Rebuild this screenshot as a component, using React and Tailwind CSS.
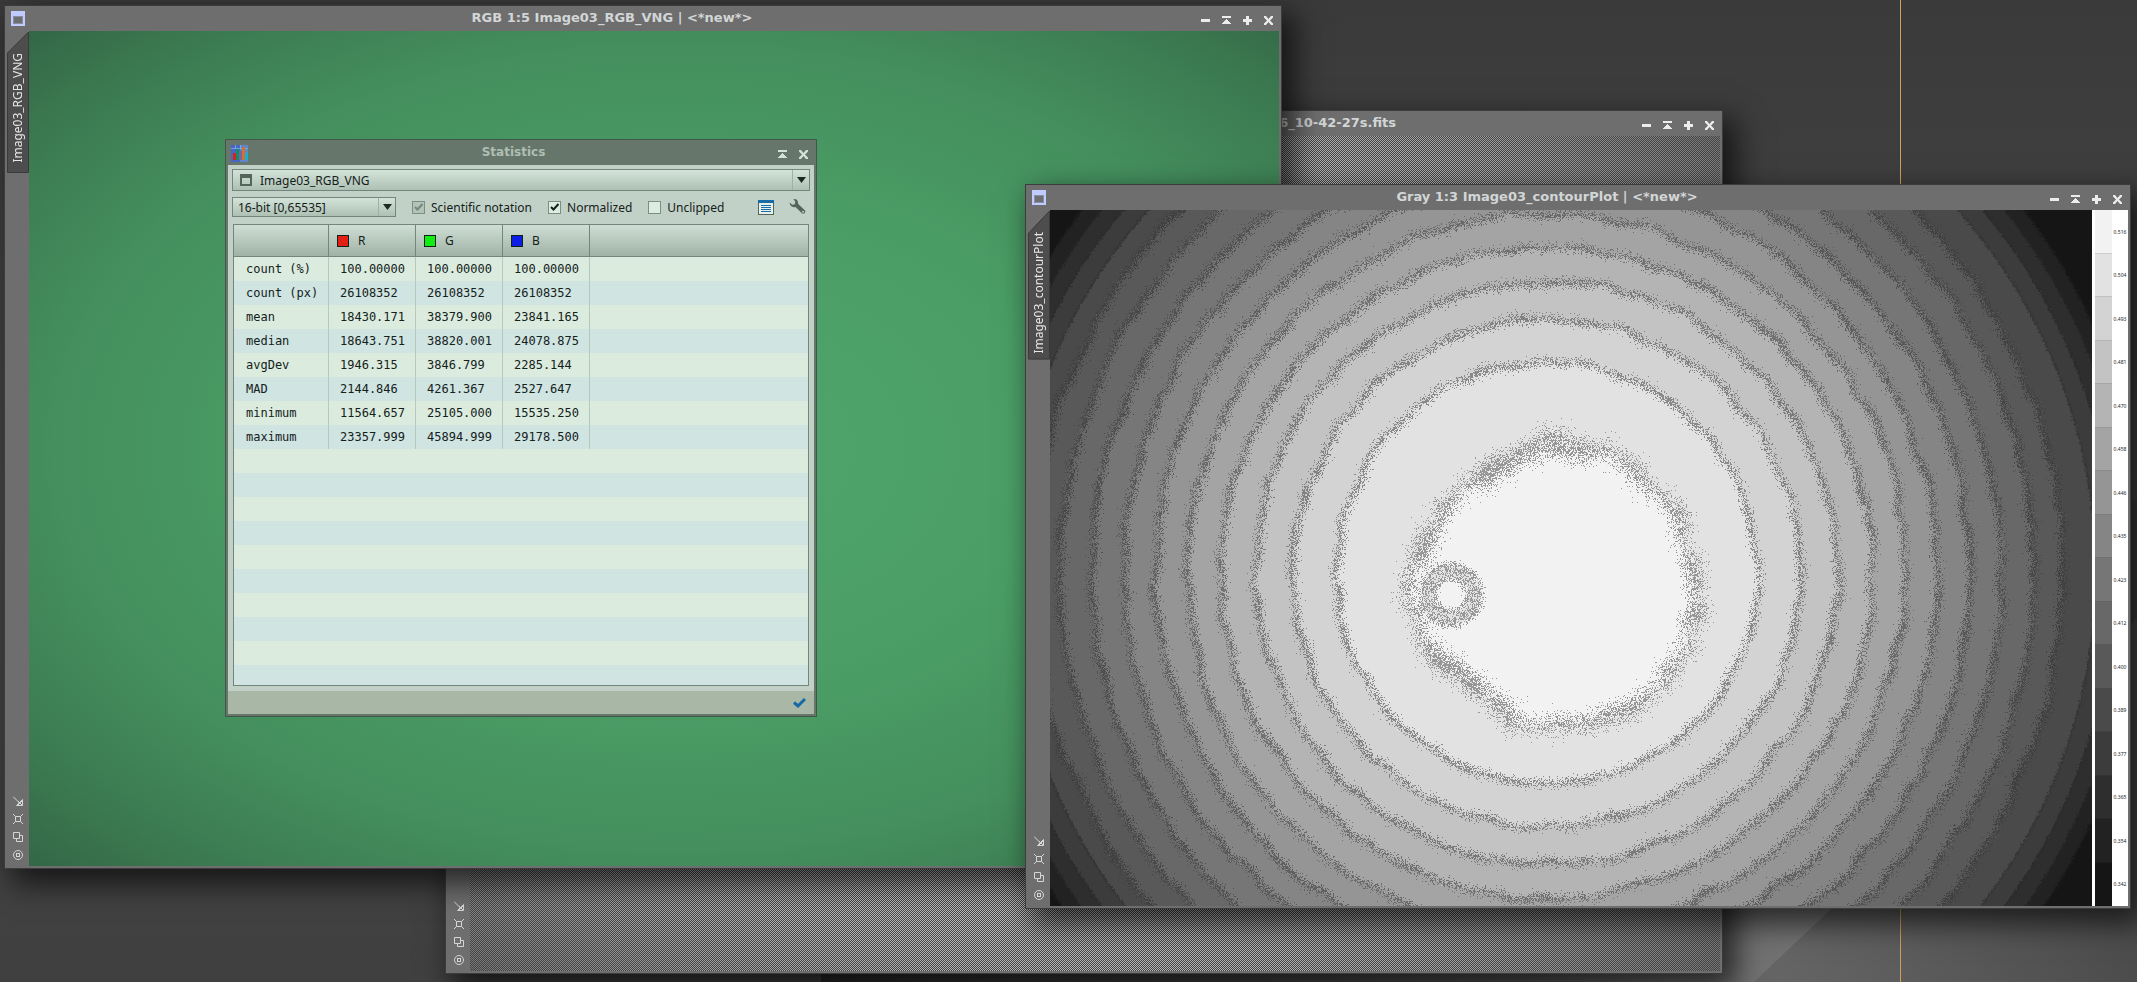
import React, { useState } from 'react';
import clsx from 'clsx';

const LEVELS = [
  '#f2f2f2', '#e2e2e2', '#d3d3d3', '#c3c3c3', '#b4b4b4', '#a4a4a4', '#959595', '#858585',
  '#767676', '#686868', '#595959', '#4a4a4a', '#3c3c3c', '#2e2e2e', '#222222', '#151515',
];

const SCALE_LABELS = [
  '0.516', '0.504', '0.493', '0.481', '0.470', '0.458', '0.446', '0.435',
  '0.423', '0.412', '0.400', '0.389', '0.377', '0.365', '0.354', '0.342',
];

// radius of each contour, inner to outer, with the level outside it
const RINGS = [
  { r: 211, level: 2, line: '#8a8a8a' },
  { r: 254, level: 3, line: '#828282' },
  { r: 291, level: 4, line: '#7a7a7a' },
  { r: 326, level: 5, line: '#727272' },
  { r: 359, level: 6, line: '#6a6a6a' },
  { r: 391, level: 7, line: '#606060' },
  { r: 423, level: 8, line: '#585858' },
  { r: 455, level: 9, line: '#505050' },
  { r: 487, level: 10, line: '#484848' },
  { r: 516, level: 11, line: '#404040' },
  { r: 543, level: 12, line: '#363636' },
  { r: 562, level: 13, line: '#2c2c2c' },
  { r: 579, level: 14, line: '#242424' },
  { r: 594, level: 15, line: '#1a1a1a' },
];

const PEAK =
  'M1543 434 L1575 442 L1606 449 L1640 478 L1672 508 L1688 540 L1693 575 L1690 620 L1680 655 L1655 685 L1620 708 L1590 718 L1552 726 L1515 720 L1490 696 L1462 678 L1432 655 L1412 622 L1405 590 L1412 560 L1422 535 L1442 505 L1470 480 L1505 456 Z';

// the broad noisy parts of the innermost contour
const PEAK_NOISE = 'M1418 560 L1432 522 L1460 490 L1500 464 L1545 446 L1590 456 M1424 640 L1450 662 L1485 690 M1500 722 L1550 722 L1600 714';

const STATS = [
  ['count (%)', '100.00000', '100.00000', '100.00000'],
  ['count (px)', '26108352', '26108352', '26108352'],
  ['mean', '18430.171', '38379.900', '23841.165'],
  ['median', '18643.751', '38820.001', '24078.875'],
  ['avgDev', '1946.315', '3846.799', '2285.144'],
  ['MAD', '2144.846', '4261.367', '2527.647'],
  ['minimum', '11564.657', '25105.000', '15535.250'],
  ['maximum', '23357.999', '45894.999', '29178.500'],
];

const CHANNELS = [
  { name: 'R', swatch: 'bg-[#e32014]' },
  { name: 'G', swatch: 'bg-[#10ee10]' },
  { name: 'B', swatch: 'bg-[#0c1ee6]' },
];

const GLYPHS = {
  minimize: <path d="M0 3h9v3H0z" />,
  shade: <path d="M0 0h9v2H0zM4 3h1v1h1v1h1v1h1v1h1v1H0V7h1V6h1V5h1V4h1z" />,
  maximize: <path d="M3 0h3v3h3v3H6v3H3V6H0V3h3z" />,
  close: <path d="M0 0h2l2.500 3L7 0h2v1.500L6 4.500l3 3V9H7L4.500 6 2 9H0V7.500l3-3-3-3z" />,
};

const WINDOW_GLYPHS = ['minimize', 'shade', 'maximize', 'close'];

function TitleButtons({ names, color }) {
  return (
    <div className="flex shrink-0 items-center pt-[3px]">
      {names.map(name => (
        <button key={name} aria-label={name} className="flex h-[21px] w-[21px] items-center justify-center">
          <svg width="9" height="9" viewBox="0 0 9 9" fill={color}>{GLYPHS[name]}</svg>
        </button>
      ))}
    </div>
  );
}

function SideIcons() {
  const icons = {
    resize: <path d="M0 .5l7 7M9.500 3.500v6h-6zM5 5l4 4M9 5L5 9" />,
    fit: <path d="M2.500 2.500h5v5h-5zM0 0l2.500 2.500M10 0L7.500 2.500M0 10l2.500-2.500M10 10L7.500 7.500" />,
    duplicate: <path d="M.5.5h6v6h-6zM6.500 3.500h3v6h-6v-3" />,
    target: (
      <>
        <circle cx="5" cy="5" r="4.500" />
        <rect x="3.500" y="3.500" width="3" height="3" />
      </>
    ),
  };
  return (
    <div className="flex flex-col items-center pb-[2px] pl-[2px]">
      {Object.keys(icons).map(name => (
        <button key={name} aria-label={name} className="flex h-[18px] w-[18px] items-center justify-center">
          <svg width="10" height="10" viewBox="0 0 10 10" fill="none" stroke="#d6d6d6" strokeWidth="1">
            {icons[name]}
          </svg>
        </button>
      ))}
    </div>
  );
}

function ImageWindow({ title, tab, titleClass, className, children }) {
  return (
    <section
      className={clsx(
        'absolute flex flex-col bg-[#6e6e6e] pr-[2px] pb-[2px] outline outline-[#3c3c3c] shadow-[10px_12px_28px_4px_rgba(0,0,0,0.65)]',
        className,
      )}
    >
      <header className="flex h-[25px] shrink-0 items-center">
        <span className="flex w-[24px] justify-center pl-[2px]">
          <svg width="14" height="15" viewBox="0 0 14 15">
            <path d="M0 0h14v15H0zM2 5v8h10V5z" fill="#c0ccff" fillRule="evenodd" />
            <path d="M2.500 5.500h9v7h-9z" fill="none" stroke="#8a8fa8" />
          </svg>
        </span>
        <h2
          className={clsx(
            "flex-1 pb-[2px] font-['DejaVu_Sans',sans-serif] text-[13px] leading-[16px] font-bold text-[#d2d6d6]",
            titleClass || 'text-center',
          )}
        >
          {title}
        </h2>
        <TitleButtons names={WINDOW_GLYPHS} color="#ececec" />
      </header>
      <div className="flex min-h-0 flex-1">
        <aside className="flex w-[24px] shrink-0 flex-col items-center justify-between">
          {tab ? (
            <button className="relative ml-[2px] flex min-h-[142px] w-[22px] items-start justify-center pt-[22px] pb-[6px] text-[#e6e6e6]">
              <svg className="absolute inset-0 h-full w-full" viewBox="0 0 22 142" preserveAspectRatio="none">
                <path d="M.5 22L21.500 1v140.500H.5z" fill="#4d4d4d" stroke="#3a3a3a" vectorEffect="non-scaling-stroke" />
              </svg>
              <span className="relative rotate-180 text-[12px] leading-[16px] [writing-mode:vertical-rl]">{tab}</span>
            </button>
          ) : <span />}
          <SideIcons />
        </aside>
        {children}
      </div>
    </section>
  );
}

function ContourPlot() {
  return (
    <svg className="h-full min-w-0 flex-1" viewBox="1050 210 1042 696" preserveAspectRatio="xMidYMid slice" aria-label="Contour plot">
      <defs>
        <filter id="grain" filterUnits="userSpaceOnUse" x="1010" y="170" width="1122" height="776" colorInterpolationFilters="sRGB">
          <feTurbulence type="fractalNoise" baseFrequency="0.03" numOctaves="2" seed="4" result="slow" />
          <feDisplacementMap in="SourceGraphic" in2="slow" scale="13" xChannelSelector="R" yChannelSelector="G" result="bent" />
          <feTurbulence type="fractalNoise" baseFrequency="0.75" numOctaves="2" seed="9" result="fast" />
          <feDisplacementMap in="bent" in2="fast" scale="24" xChannelSelector="R" yChannelSelector="G" />
        </filter>
        <filter id="fine" filterUnits="userSpaceOnUse" x="1010" y="170" width="1122" height="776" colorInterpolationFilters="sRGB">
          <feTurbulence type="fractalNoise" baseFrequency="0.5" numOctaves="2" seed="2" result="fast" />
          <feDisplacementMap in="SourceGraphic" in2="fast" scale="7" xChannelSelector="R" yChannelSelector="G" />
        </filter>
        <filter id="scatter" filterUnits="userSpaceOnUse" x="1330" y="370" width="440" height="430" colorInterpolationFilters="sRGB">
          <feTurbulence type="fractalNoise" baseFrequency="0.04" numOctaves="2" seed="7" result="slow" />
          <feDisplacementMap in="SourceGraphic" in2="slow" scale="26" xChannelSelector="R" yChannelSelector="G" result="bent" />
          <feTurbulence type="fractalNoise" baseFrequency="0.8" numOctaves="2" seed="5" result="fast" />
          <feDisplacementMap in="bent" in2="fast" scale="52" xChannelSelector="R" yChannelSelector="G" />
        </filter>
        <filter id="scatterSmall" filterUnits="userSpaceOnUse" x="1400" y="540" width="110" height="110" colorInterpolationFilters="sRGB">
          <feTurbulence type="fractalNoise" baseFrequency="0.8" numOctaves="2" seed="3" result="fast" />
          <feDisplacementMap in="SourceGraphic" in2="fast" scale="20" xChannelSelector="R" yChannelSelector="G" />
        </filter>
      </defs>

      <rect x="1000" y="160" width="1142" height="796" fill={LEVELS[15]} />
      <g filter="url(#fine)">
        {RINGS.slice(10).reverse().map(ring => (
          <circle key={ring.r} cx="1553" cy="572" r={ring.r} fill={LEVELS[ring.level - 1]} stroke={ring.line} strokeWidth="2" />
        ))}
      </g>
      <g filter="url(#grain)" shapeRendering="crispEdges">
        {RINGS.slice(0, 10).reverse().map(ring => (
          <circle key={ring.r} cx="1547" cy="573" r={ring.r} fill={LEVELS[ring.level - 1]} stroke={ring.line} strokeWidth="4" />
        ))}
      </g>
      <g filter="url(#scatter)" shapeRendering="crispEdges">
        <g transform="translate(3 3)">
          <path d={PEAK} fill={LEVELS[0]} stroke="#969696" strokeWidth="7" />
          <path d={PEAK_NOISE} fill="none" stroke="#989898" strokeWidth="6" />
        </g>
      </g>
      <g filter="url(#scatterSmall)" shapeRendering="crispEdges">
        <circle cx="1451" cy="595" r="30" fill={LEVELS[1]} stroke="#989898" strokeWidth="3" />
        <circle cx="1451" cy="595" r="24" fill="none" stroke="#989898" strokeWidth="3" />
        <circle cx="1451" cy="595" r="17" fill={LEVELS[0]} stroke="#989898" strokeWidth="3" />
      </g>
    </svg>
  );
}

function ContourScale() {
  return (
    <div className="flex w-[36px] shrink-0 bg-white pl-[3px]">
      <div className="flex w-[17px] flex-col">
        {LEVELS.map(color => (
          <div key={color} className="flex-1 border-b border-black/15" style={{ background: color }} />
        ))}
      </div>
      <div className="flex flex-1 flex-col">
        {SCALE_LABELS.map(label => (
          <div key={label} className="flex flex-1 items-center justify-center text-[5px] leading-[6px] text-[#222222]">
            {label}
          </div>
        ))}
      </div>
    </div>
  );
}

function Arrow() {
  return (
    <span className="flex h-full w-[17px] items-center justify-center border-l border-[#9fb0a5]">
      <svg width="9" height="6" viewBox="0 0 9 6" fill="#1c2a22"><path d="M0 0h9L4.500 6z" /></svg>
    </span>
  );
}

function Check({ label, checked, disabled, onChange, className }) {
  return (
    <label className={clsx('flex items-center gap-[6px]', className)}>
      <span className="grid h-[13px] w-[13px] place-items-center">
        <input
          type="checkbox"
          checked={checked}
          disabled={disabled}
          onChange={onChange}
          className={clsx(
            'col-start-1 row-start-1 h-[13px] w-[13px] appearance-none border border-[#7b8f83]',
            disabled ? 'bg-[#b4c3b8]' : 'bg-[#dcece1]',
          )}
        />
        {checked && (
          <svg className="pointer-events-none col-start-1 row-start-1" width="9" height="8" viewBox="0 0 9 8" fill="none"
            stroke={disabled ? '#74877b' : '#14201a'} strokeWidth="2">
            <path d="M1 4l2.500 2.500L8.500 1" />
          </svg>
        )}
      </span>
      <span className="pt-[2px] leading-[16px]">{label}</span>
    </label>
  );
}

function StatisticsDialog() {
  const [normalized, setNormalized] = useState(true);
  const [unclipped, setUnclipped] = useState(false);
  const rows = [...STATS, ...Array.from({ length: 10 }, () => ['', '', '', ''])];

  return (
    <section className="absolute top-[139px] left-[225px] flex h-[578px] w-[592px] flex-col border border-[#42574a] bg-[#66766b] px-[2px] pb-[2px] text-[12px] text-[#14211a]">
      <header className="flex h-[25px] shrink-0 items-center">
        <span className="flex w-[27px] pt-[2px] pl-[3px]">
          <svg width="17" height="17" viewBox="0 0 17 17">
            <path d="M0 0h17v17H0z" fill="#5f86cc" />
            <path d="M0 0h9v17H0z" fill="#4866c4" />
            <path d="M0 3.500h17M4.500 0v4M9.500 0v4" stroke="#8db4e6" strokeWidth=".7" />
            <path d="M2 8h3v7H2z" fill="#d8201c" />
            <path d="M5 4h3v11H5z" fill="#0f8f62" />
            <path d="M8 6h3v9H8z" fill="#7c62a0" />
            <path d="M11 2h3v13h-3z" fill="#d2722a" />
            <path d="M14 8h3v7h-3z" fill="#12b0dc" />
          </svg>
        </span>
        <h2 className="flex-1 pb-[2px] text-center font-['DejaVu_Sans',sans-serif] text-[12px] leading-[16px] font-bold text-[#afbfb3]">
          Statistics
        </h2>
        <TitleButtons names={['shade', 'close']} color="#d3e2d8" />
      </header>

      <div className="flex min-h-0 flex-1 flex-col bg-[#c2d1c8] px-[4px] pt-[4px] pb-[5px]">
        <div className="flex h-[22px] shrink-0 items-center border border-[#73867b] bg-linear-to-b from-[#d3e3d9] to-[#aec0b4]">
          <svg className="ml-[7px]" width="12" height="12" viewBox="0 0 12 12">
            <path d="M0 0h12v12H0zM2 4v6h8V4z" fill="#55655b" fillRule="evenodd" />
          </svg>
          <select aria-label="View" className="ml-[8px] flex-1 appearance-none bg-transparent pt-[2px] leading-[18px] outline-none">
            <option>Image03_RGB_VNG</option>
          </select>
          <Arrow />
        </div>

        <div className="mt-[6px] flex h-[20px] shrink-0 items-center">
          <div className="flex h-[20px] w-[164px] items-center border border-[#73867b] bg-linear-to-b from-[#d3e3d9] to-[#aec0b4]">
            <select aria-label="Range" className="ml-[5px] flex-1 appearance-none bg-transparent pt-[2px] leading-[16px] outline-none">
              <option>16-bit [0,65535]</option>
            </select>
            <Arrow />
          </div>
          <Check className="ml-[16px]" label="Scientific notation" checked disabled />
          <Check className="ml-[16px]" label="Normalized" checked={normalized} onChange={e => setNormalized(e.target.checked)} />
          <Check className="ml-[16px]" label="Unclipped" checked={unclipped} onChange={e => setUnclipped(e.target.checked)} />
          <div className="ml-auto flex items-center gap-[15px] pr-[4px]">
            <button aria-label="Report">
              <svg width="16" height="15" viewBox="0 0 16 15">
                <path d="M0 0h16v15H0z" fill="#55655b" />
                <path d="M1 3h14v11H1z" fill="#e4f0ea" />
                <path d="M0 0h16v3H0z" fill="#1a6aa8" />
                <path d="M3 5.500h10M3 7.500h10M3 9.500h10M3 11.500h10" stroke="#1a6aa8" />
              </svg>
            </button>
            <button aria-label="Preferences">
              <svg width="17" height="16" viewBox="0 0 17 16">
                <path
                  d="M4.500.2c2.600-.6 5.200 1.500 4.500 4.500l6.800 6.500c1.600 1.700-1 4.500-2.900 3L6.500 8C3.500 9 .5 7 .7 3.500l2.600 2.300 2.500-.6.500-2.400z"
                  fill="#55655b"
                />
                <circle cx="14" cy="12.800" r="1" fill="#c2d1c8" />
              </svg>
            </button>
          </div>
        </div>

        <div className="mx-[1px] mt-[7px] min-h-0 flex-1 overflow-hidden border border-[#73867b] bg-[#dbecdf]">
          <table className="w-full table-fixed border-separate border-spacing-0">
            <thead>
              <tr className="h-[32px] bg-linear-to-b from-[#cfdfd5] to-[#9fb0a5] text-left">
                <th scope="col" aria-label="Statistic" className="w-[95px] border-r border-b border-[#73867b]" />
                {CHANNELS.map(channel => (
                  <th key={channel.name} scope="col" className="w-[87px] border-r border-b border-[#73867b] pl-[8px] font-normal">
                    <span className="flex items-center gap-[9px]">
                      <span className={clsx('h-[12px] w-[12px] border border-[#10201a]', channel.swatch)} />
                      {channel.name}
                    </span>
                  </th>
                ))}
                <th aria-hidden="true" className="border-b border-[#73867b]" />
              </tr>
            </thead>
            <tbody className="font-['DejaVu_Sans_Mono','Liberation_Mono',monospace]">
              {rows.map((row, i) => (
                <tr key={i} className="h-[24px] odd:bg-[#dbecdf] even:bg-[#d0e4e2]">
                  {row.map((value, j) => (
                    <td
                      key={j}
                      className={clsx(
                        'p-0 leading-[16px]',
                        j === 0 ? 'pl-[12px]' : 'pl-[11px]',
                        row[0] && 'border-r border-[#b6c9bb]',
                      )}
                    >
                      {value}
                    </td>
                  ))}
                  <td />
                </tr>
              ))}
            </tbody>
          </table>
        </div>
      </div>

      <footer className="flex h-[23px] shrink-0 items-center justify-end bg-[#a9b8a6] pr-[8px]">
        <button aria-label="Done">
          <svg width="13" height="10" viewBox="0 0 13 10" fill="none" stroke="#1668a8" strokeWidth="3">
            <path d="M1 4.500l4 3.500 7-7" />
          </svg>
        </button>
      </footer>
    </section>
  );
}

function Wallpaper() {
  return (
    <svg className="absolute inset-0 h-full w-full" viewBox="0 0 2137 982" preserveAspectRatio="none" aria-hidden="true">
      <defs>
        <linearGradient id="floor" gradientUnits="userSpaceOnUse" x1="821" y1="0" x2="2137" y2="0">
          <stop offset="0" stopColor="#2a2a2a" />
          <stop offset=".55" stopColor="#565656" />
          <stop offset=".7" stopColor="#727272" />
          <stop offset=".8" stopColor="#727272" />
          <stop offset="1" stopColor="#404040" />
        </linearGradient>
        <linearGradient id="slope" gradientUnits="userSpaceOnUse" x1="1760" y1="0" x2="2137" y2="0">
          <stop offset="0" stopColor="#666666" />
          <stop offset="1" stopColor="#4c4c4c" />
        </linearGradient>
      </defs>
      <path d="M821 940L1700 700L2137 500V982H821z" fill="url(#floor)" />
      <path d="M1754 982L2137 618V982z" fill="url(#slope)" />
      <path d="M1900.500 0V982" stroke="#d59f58" strokeWidth="1" />
    </svg>
  );
}

export default function App() {
  return (
    <main className="relative min-h-screen w-full overflow-hidden bg-linear-to-b from-[#3a3a3a] via-[#464646] to-[#404040] font-['Noto_Sans','DejaVu_Sans',sans-serif]">
      <Wallpaper />

      <ImageWindow
        title="6_10-42-27s.fits"
        titleClass="pr-[240px] text-right"
        className="top-[111px] left-[446px] h-[862px] w-[1276px]"
      >
        <div className="relative flex-1 bg-[radial-gradient(ellipse_farthest-corner_at_center,#d8d8d8_0%,#d0d0d0_45%,#b6b6b6_70%,#969696_86%,#747474_100%)]">
          <div className="absolute inset-0 bg-[repeating-conic-gradient(#444444_0_25%,transparent_0_50%)] bg-[length:2px_2px]" />
        </div>
      </ImageWindow>

      <ImageWindow
        title="RGB 1:5 Image03_RGB_VNG | <*new*>"
        tab="Image03_RGB_VNG"
        className="top-[6px] left-[5px] h-[862px] w-[1276px]"
      >
        <div className="flex-1 bg-[radial-gradient(ellipse_farthest-corner_at_52%_50%,#4fa66c_0%,#4b9e66_40%,#448f5d_68%,#3c7b51_86%,#336747_100%)]" />
      </ImageWindow>

      <StatisticsDialog />

      <ImageWindow
        title="Gray 1:3 Image03_contourPlot | <*new*>"
        tab="Image03_contourPlot"
        className="top-[185px] left-[1026px] h-[723px] w-[1104px]"
      >
        <ContourPlot />
        <ContourScale />
      </ImageWindow>
    </main>
  );
}
